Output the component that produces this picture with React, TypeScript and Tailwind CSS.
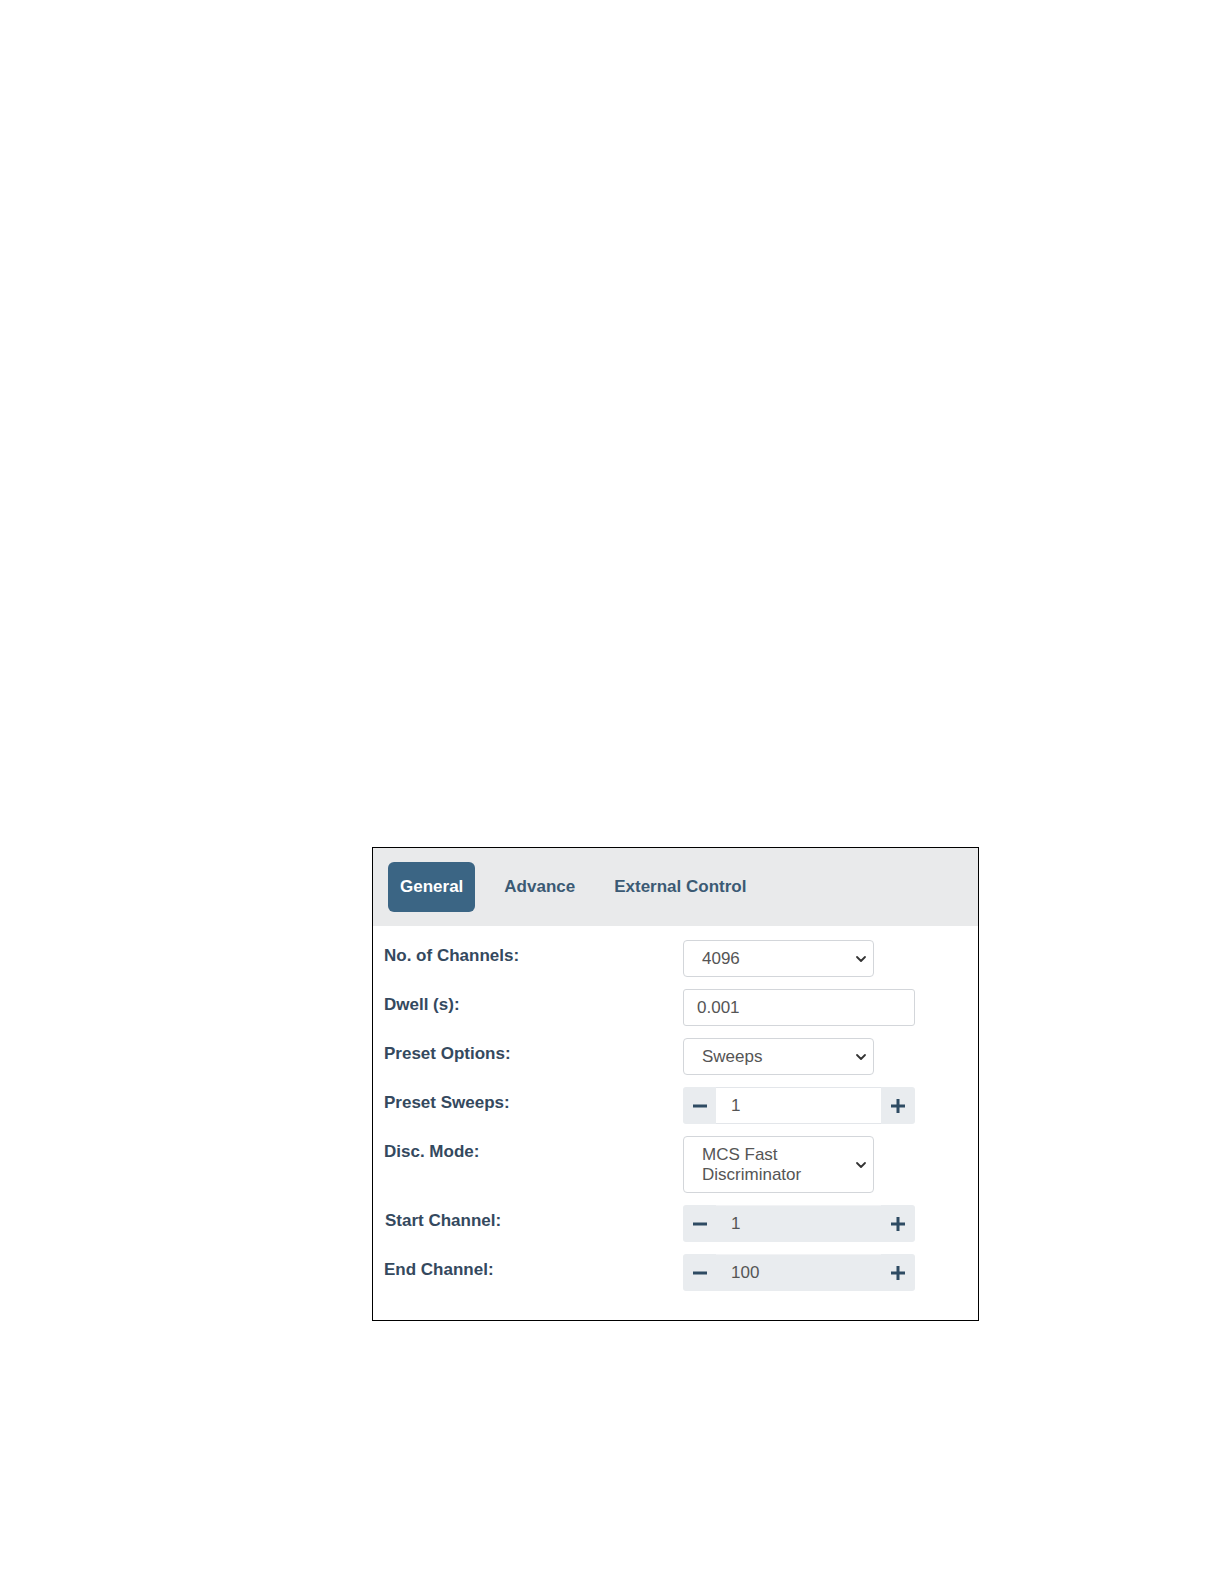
import React from "react";

const font = { fontFamily: '"Liberation Sans", Arial, sans-serif' };

function Chevron() {
  return (
    <svg width="12" height="8" viewBox="0 0 12 8" className="shrink-0">
      <path d="M2 2 L6 6 L10 2" fill="none" stroke="#333" strokeWidth="1.8" strokeLinecap="round" strokeLinejoin="round" />
    </svg>
  );
}

function Select({ children, tall }: { children: React.ReactNode; tall?: boolean }) {
  return (
    <div
      className={`flex w-[191px] items-center justify-between rounded-[4px] border border-[#d3d6da] bg-white pl-[18px] pr-[6px] text-[17px] text-[#555] ${tall ? "h-[57px] leading-[20px]" : "h-[37px]"}`}
    >
      <div>{children}</div>
      <Chevron />
    </div>
  );
}

function Minus() {
  return (
    <svg width="16" height="16" viewBox="0 0 16 16">
      <rect x="1" y="6.5" width="14" height="3" fill="#2e4b63" />
    </svg>
  );
}
function Plus() {
  return (
    <svg width="16" height="16" viewBox="0 0 16 16">
      <rect x="1" y="6.5" width="14" height="3" fill="#2e4b63" />
      <rect x="6.5" y="1" width="3" height="14" fill="#2e4b63" />
    </svg>
  );
}

function Stepper({ value, disabled }: { value: string; disabled?: boolean }) {
  return (
    <div className="flex h-[37px] w-[232px] overflow-hidden rounded-[3px] bg-[#e9ecef]">
      <div className="flex w-[33px] items-center justify-center">
        <Minus />
      </div>
      <div
        className={`flex flex-1 items-center pl-[15px] text-[17px] text-[#555] ${disabled ? "bg-[#e9ecef] border-t border-[#f2f3f5]" : "bg-white border-y border-[#e3e6ea]"}`}
      >
        {value}
      </div>
      <div className="flex w-[34px] items-center justify-center">
        <Plus />
      </div>
    </div>
  );
}

function Row({ label, children, ml }: { label: string; children: React.ReactNode; ml?: boolean }) {
  return (
    <div className="flex items-start">
      <div className={`w-[299px] pt-[6px] text-[17px] font-bold leading-[20px] text-[#34495e] ${ml ? "pl-[1px]" : ""}`}>
        {label}
      </div>
      {children}
    </div>
  );
}

export default function App() {
  return (
    <div className="h-[1584px] overflow-hidden bg-white pl-[372px] pt-[847px]" style={font}>
      <div className="w-[607px] border border-black bg-white">
        <div className="flex h-[78px] items-center bg-[#e9eaeb] pl-[15px]">
          <div className="flex h-[50px] items-center rounded-[6px] bg-[#3b6584] px-[12px] text-[17px] font-bold text-white">
            General
          </div>
          <div className="ml-[29px] text-[17px] font-bold text-[#3b5a74]">Advance</div>
          <div className="ml-[39px] text-[17px] font-bold text-[#3b5a74]">External Control</div>
        </div>
        <div className="flex flex-col gap-[12px] pb-[29px] pl-[11px] pt-[14px]">
          <Row label="No. of Channels:">
            <Select>4096</Select>
          </Row>
          <Row label="Dwell (s):">
            <div className="flex h-[37px] w-[232px] items-center rounded-[3px] border border-[#d3d6da] bg-white pl-[13px] text-[17px] text-[#555]">
              0.001
            </div>
          </Row>
          <Row label="Preset Options:">
            <Select>Sweeps</Select>
          </Row>
          <Row label="Preset Sweeps:">
            <Stepper value="1" />
          </Row>
          <Row label="Disc. Mode:">
            <Select tall>
              MCS Fast
              <br />
              Discriminator
            </Select>
          </Row>
          <Row label="Start Channel:" ml>
            <Stepper value="1" disabled />
          </Row>
          <Row label="End Channel:">
            <Stepper value="100" disabled />
          </Row>
        </div>
      </div>
    </div>
  );
}
